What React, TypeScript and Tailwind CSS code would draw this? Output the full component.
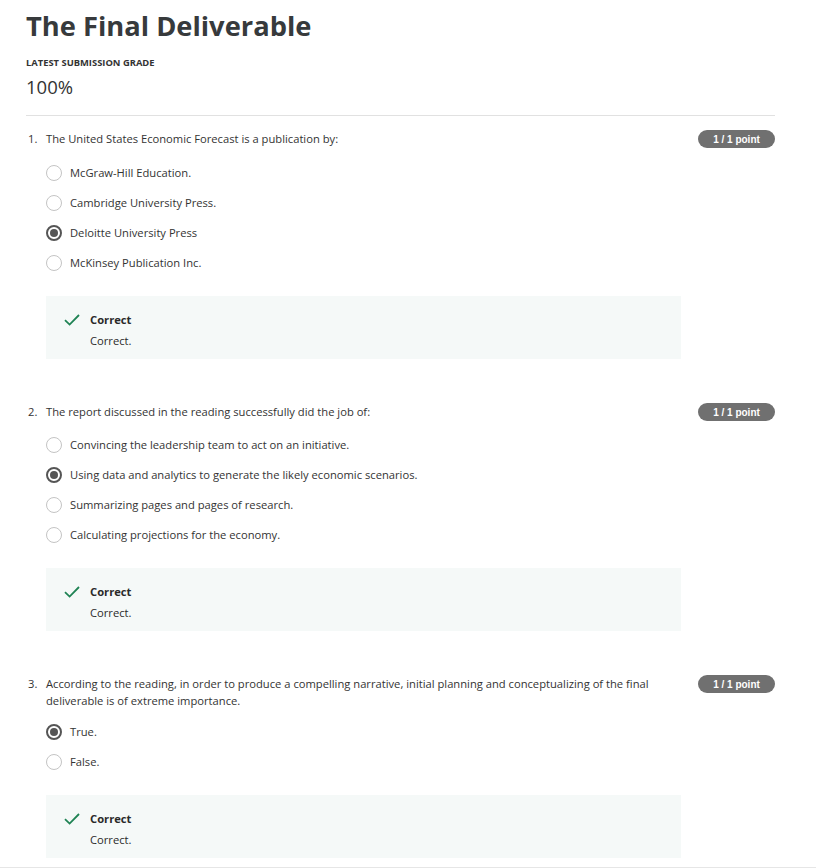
import React from 'react'

type Question = {
  num: number
  text: string
  options: string[]
  selected: number
  optGap: string
  after: string
}

const QUESTIONS: Question[] = [
  {
    num: 1,
    text: 'The United States Economic Forecast is a publication by:',
    options: [
      'McGraw-Hill Education.',
      'Cambridge University Press.',
      'Deloitte University Press',
      'McKinsey Publication Inc.',
    ],
    selected: 2,
    optGap: 'mt-[10px]',
    after: 'pb-[44px]',
  },
  {
    num: 2,
    text: 'The report discussed in the reading successfully did the job of:',
    options: [
      'Convincing the leadership team to act on an initiative.',
      'Using data and analytics to generate the likely economic scenarios.',
      'Summarizing pages and pages of research.',
      'Calculating projections for the economy.',
    ],
    selected: 1,
    optGap: 'mt-[9px]',
    after: 'pb-[44px]',
  },
  {
    num: 3,
    text: 'According to the reading, in order to produce a compelling narrative, initial planning and conceptualizing of the final deliverable is of extreme importance.',
    options: ['True.', 'False.'],
    selected: 0,
    optGap: 'mt-[8px]',
    after: 'pb-[10px]',
  },
]

function Radio({ checked }: { checked: boolean }) {
  if (checked) {
    return (
      <span className="grid h-4 w-4 shrink-0 place-items-center rounded-full border-2 border-[#555]">
        <span className="h-2 w-2 rounded-full bg-[#555]" />
      </span>
    )
  }
  return <span className="h-4 w-4 shrink-0 rounded-full border border-[#c4c4c4]" />
}

function Feedback() {
  return (
    <div className="mt-[18px] w-[635px] bg-[#f5f9f8] pb-[10px] pl-[18px] pt-[15px]">
      <div className="flex items-center gap-[10px] leading-[17px]">
        <svg width="16" height="12" viewBox="0 0 16 12" fill="none" className="shrink-0">
          <path d="M1 6.2 L5.6 10.6 L15 1" stroke="#1f8354" strokeWidth="1.8" />
        </svg>
        <span className="text-[11.2px] font-bold text-[#2a2a2a]">Correct</span>
      </div>
      <div className="mt-1 pl-[26px] text-[11.2px] leading-[17px] text-[#2a2a2a]">Correct.</div>
    </div>
  )
}

function QuestionBlock({ q }: { q: Question }) {
  return (
    <div className={q.after}>
      <div className="flex items-start justify-between">
        <div className="flex w-[640px] text-[11.2px] leading-[17px] text-[#333]">
          <span className="w-[20px] shrink-0 pl-[2px]">{q.num}.</span>
          <span>{q.text}</span>
        </div>
        <span
          className="flex h-[18px] w-[77px] items-center justify-center rounded-full bg-[#707070] text-[10px] font-bold text-white"
          style={{ fontFamily: '"Liberation Sans", Arial, sans-serif' }}
        >
          1 / 1 point
        </span>
      </div>
      <div className="ml-[20px]">
        <div className={`${q.optGap} flex flex-col`}>
          {q.options.map((opt, i) => (
            <label key={i} className="flex h-[30px] items-center gap-[8px] text-[11.2px] text-[#333]">
              <Radio checked={i === q.selected} />
              <span>{opt}</span>
            </label>
          ))}
        </div>
        <Feedback />
      </div>
    </div>
  )
}

export default function App() {
  return (
    <div
      className="h-[868px] overflow-hidden border-b border-[#e6e6e6] bg-white"
      style={{ fontFamily: '"Open Sans", "Noto Sans", sans-serif' }}
    >
      <div className="w-[775px] pl-[26px]">
        <h1 className="pt-[7px] text-[27.3px] font-bold leading-[38px] text-[#373a3c]">The Final Deliverable</h1>
        <div className="mt-[12px] text-[9.4px] font-bold uppercase leading-[12px] text-[#333]">
          Latest Submission Grade
        </div>
        <div className="mt-[6px] text-[18.5px] leading-[24px] text-[#333]">100%</div>
        <hr className="mt-[16px] border-t border-[#e1e1e1]" />
        <div className="pt-[14px]">
          {QUESTIONS.map((q) => (
            <QuestionBlock key={q.num} q={q} />
          ))}
        </div>
      </div>
    </div>
  )
}
